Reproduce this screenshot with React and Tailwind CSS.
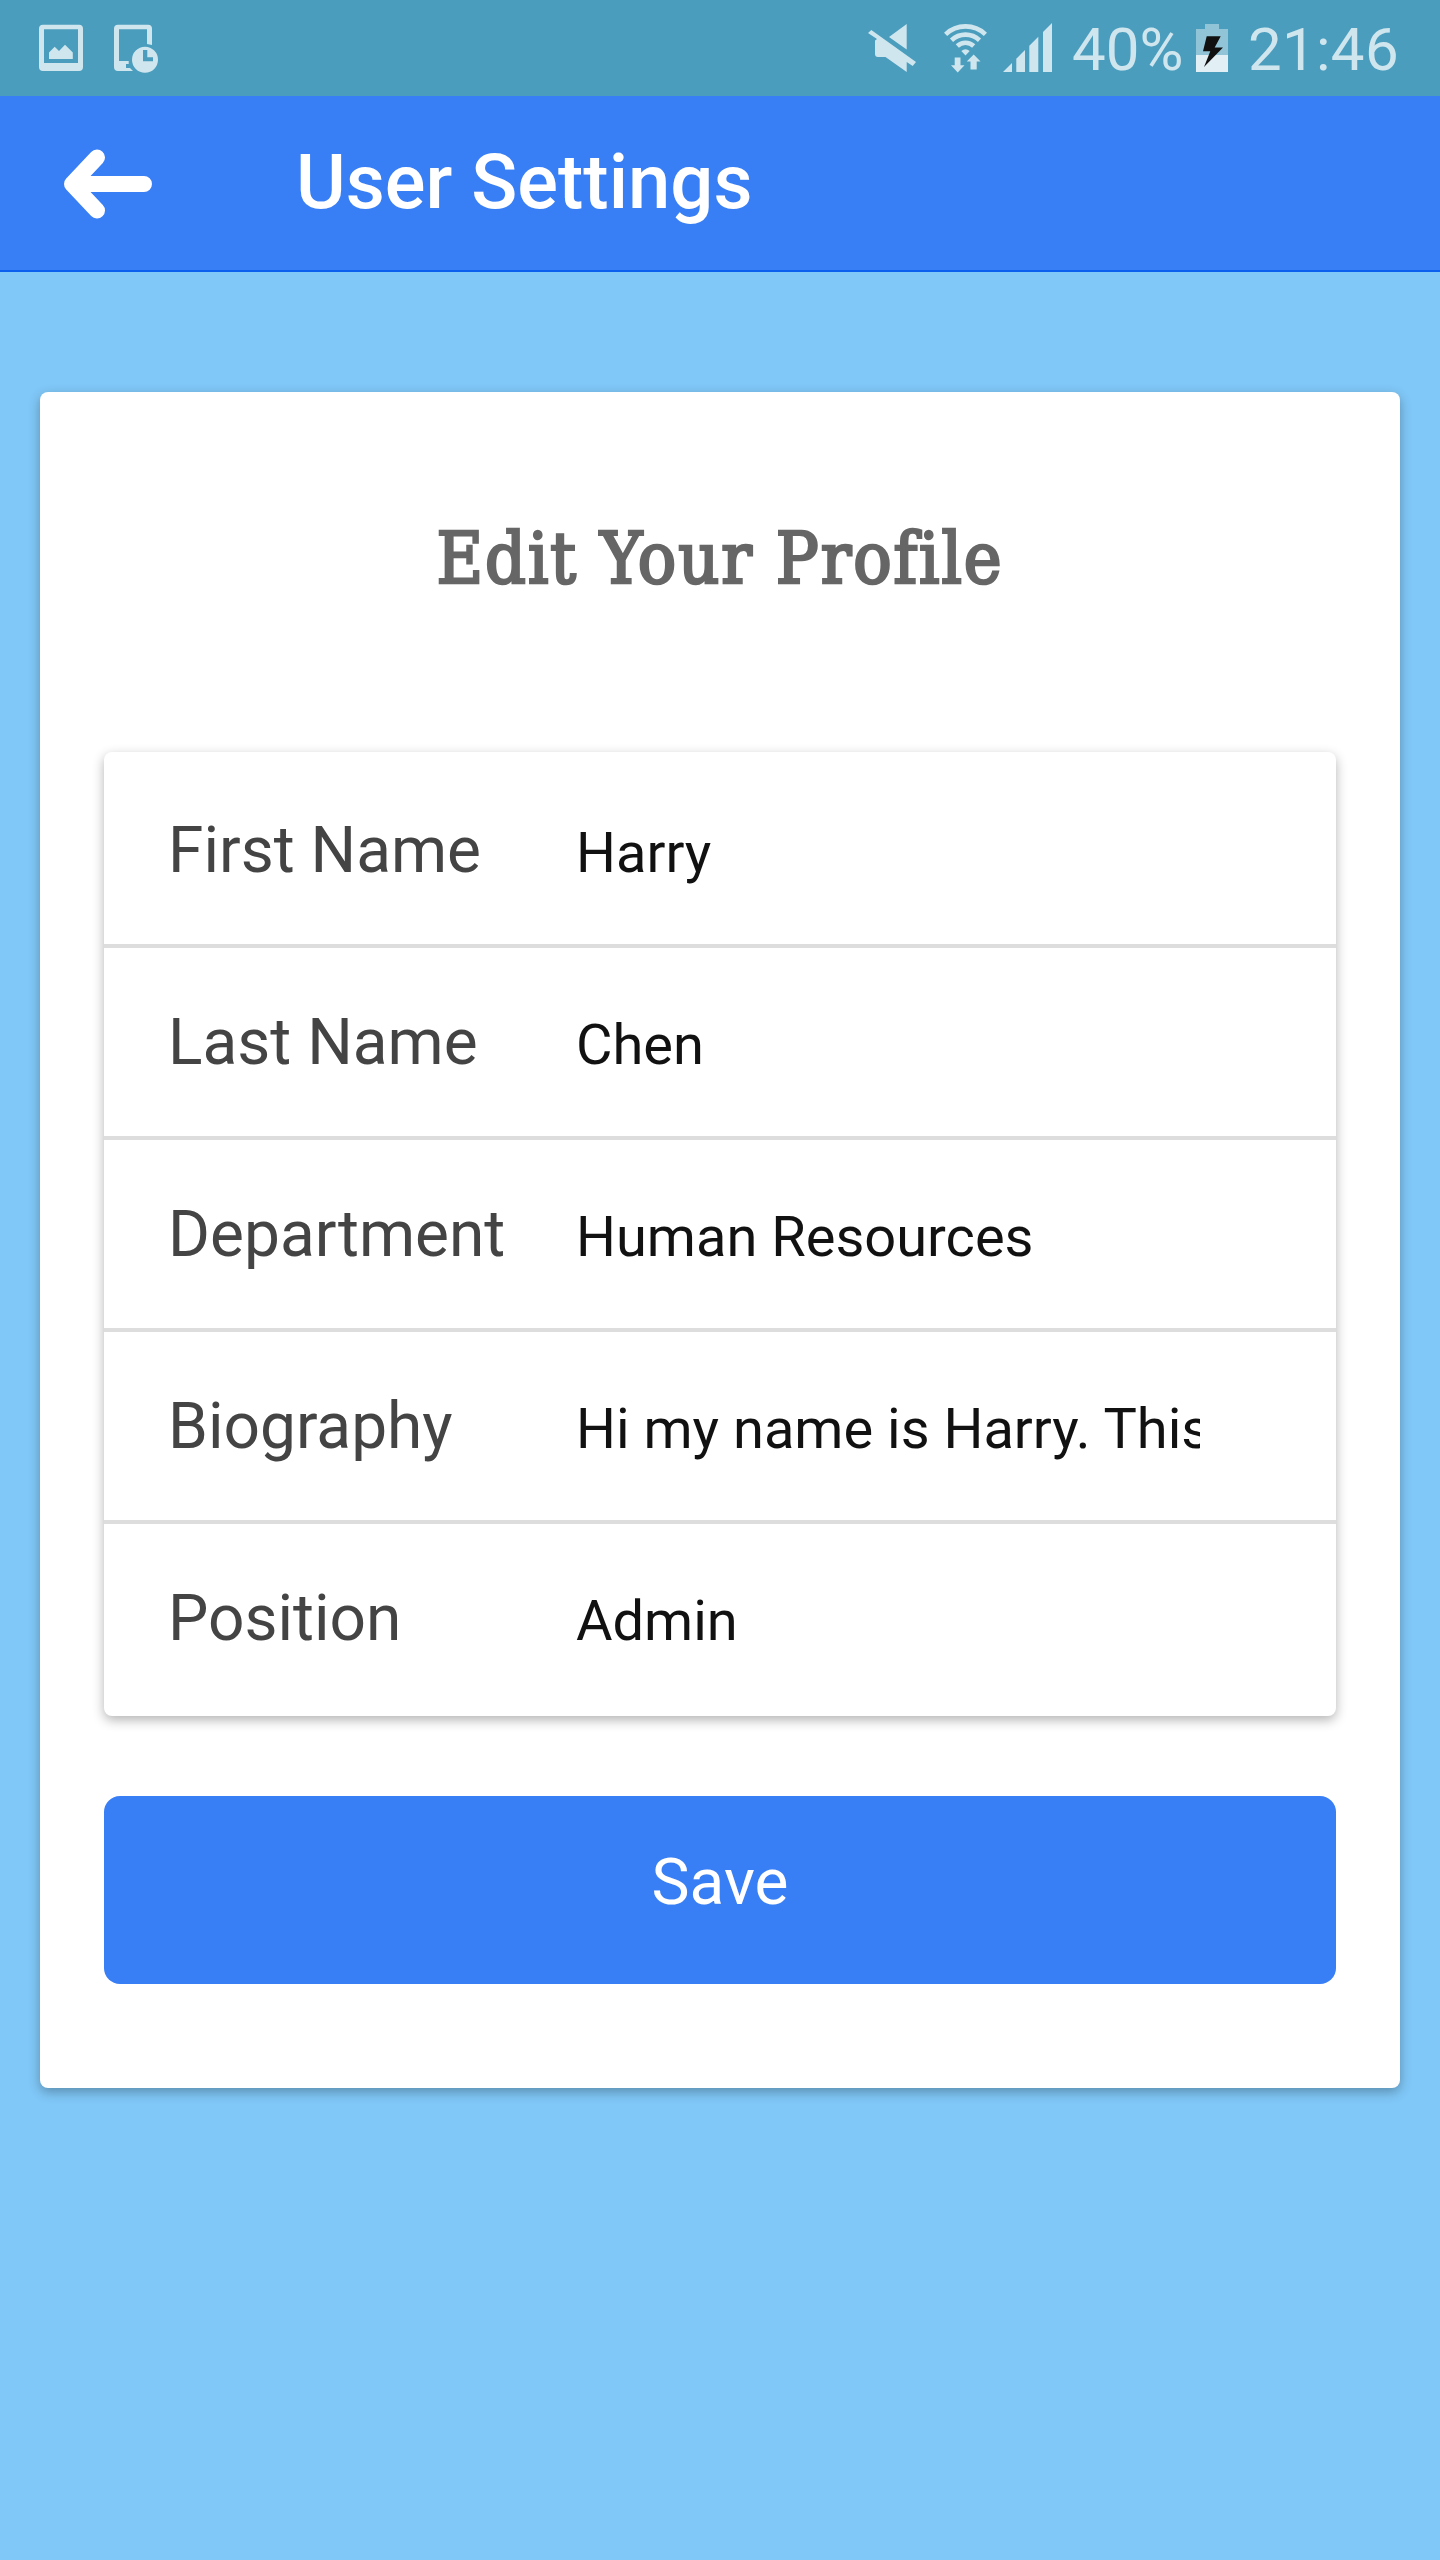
const fields = [
  { label: "First Name", value: "Harry" },
  { label: "Last Name", value: "Chen" },
  { label: "Department", value: "Human Resources" },
  { label: "Biography", value: "Hi my name is Harry. This" },
  { label: "Position", value: "Admin" },
];

function PictureIcon() {
  return (
    <svg className="h-12 w-11" viewBox="0 0 44 48" fill="#d0e6ee">
      <path fillRule="evenodd" d="M4 0.7H40Q44 0.7 44 4.7V43Q44 47 40 47H4Q0 47 0 43V4.7Q0 0.7 4 0.7ZM5 5.3V39H39V5.3Z" />
      <path d="M10 28.5L15.7 22.7L20 27L26 20.8L33.8 28.5V35H10Z" />
    </svg>
  );
}

function DeviceClockIcon() {
  return (
    <svg className="h-[50px] w-11" viewBox="0 0 44 50" fill="#d0e6ee">
      <path d="M4 0.7H34Q38 0.7 38 4.7V21L33 20V5.3H5V37H14.7V40H12V44H16L19 47H4Q0 47 0 43V4.7Q0 0.7 4 0.7Z" />
      <path fillRule="evenodd" d="M31 22.7A13 13 0 1 1 31 48.7A13 13 0 1 1 31 22.7ZM29 26V37.3H39V33.3H33.3V26Z" />
    </svg>
  );
}

function MutedIcon() {
  return (
    <svg className="h-[50px] w-12" viewBox="0 0 48 50" fill="#d0e6ee">
      <path d="M38.7 1V26.5L21 14Z" />
      <path d="M3.3 7L48 39L44.7 43L38.7 39V49L17.5 34H10Q7 34 7 31V17.5L9 16L0 10Z" />
    </svg>
  );
}

function WifiIcon() {
  return (
    <svg className="h-[50px] w-[43px]" viewBox="0 0 43 50">
      <g fill="none" stroke="#d0e6ee" strokeWidth="4.6">
        <path d="M1.6 11.3A29 29 0 0 1 41.4 11.3" />
        <path d="M7.5 17.2A20.5 20.5 0 0 1 35.5 17.2" />
        <path d="M13.3 23A12 12 0 0 1 29.7 23" />
      </g>
      <g fill="#d0e6ee">
        <path d="M21.5 32.5L17.3 28Q21.5 24.5 25.7 28Z" />
        <path d="M10.7 34.5H16.5V42.3H20.5L13.7 49.5L7 42.3H10.7Z" />
        <path d="M29.7 31.5L36.5 38.5H32.7V46.5H26.5V38.5H22.7Z" />
      </g>
    </svg>
  );
}

function SignalIcon() {
  return (
    <svg className="h-[49px] w-[49px]" viewBox="0 0 49 49" fill="#d0e6ee">
      <path d="M0 49L9 40V49Z" />
      <path d="M13.3 49V35.7L22 27V49Z" />
      <path d="M26.3 49V22.7L35.3 13.7V49Z" />
      <path d="M40 49V9L49 0V49Z" />
    </svg>
  );
}

function BatteryIcon() {
  return (
    <svg className="h-12 w-8" viewBox="0 0 32 48">
      <path fill="#92c4d7" d="M9 0H23V5H32V31H0V5H9Z" />
      <path fill="#e2eff5" d="M0 31H32V48H0Z" />
      <path fill="#111" d="M10.7 12.3H24.7L18.7 23.5H27L8 43L14.3 27.3H7Z" />
    </svg>
  );
}

function BackIcon() {
  return (
    <svg className="h-[70px] w-[88px]" viewBox="0 0 88 70" fill="none" stroke="#fff" strokeWidth="16" strokeLinecap="round" strokeLinejoin="round">
      <path d="M33 8.5L8 35L33 61.5M9 35H80" />
      <path fill="#fff" stroke="none" d="M8 27L30 35L8 43Z" />
    </svg>
  );
}

export default function App() {
  return (
    <div className="flex h-[2560px] w-[1440px] flex-col overflow-hidden bg-[#80c8f8] font-['Roboto',sans-serif]">
      <div className="flex h-24 shrink-0 items-start bg-[#4a9dbd] pt-6 pl-[39px] text-[60px] leading-none whitespace-nowrap text-[#d0e6ee]">
        <PictureIcon />
        <div className="ml-[31px]"><DeviceClockIcon /></div>
        <div className="ml-[710px] -mt-px"><MutedIcon /></div>
        <div className="ml-[28px] -mt-px"><WifiIcon /></div>
        <div className="ml-[16px] -mt-px"><SignalIcon /></div>
        <span className="ml-5 -mt-1 w-[124px]">40%</span>
        <BatteryIcon />
        <span className="ml-5 -mt-1 tracking-[0.3px]">21:46</span>
      </div>

      <header className="flex h-44 shrink-0 items-start border-b-2 border-[#0c60ee] bg-[#387ef5] pl-16">
        <button className="mt-[53px]" aria-label="Back"><BackIcon /></button>
        <h1 className="mt-9 ml-36 text-[76px] leading-[100px] font-medium text-white">User Settings</h1>
      </header>

      <main className="mx-10 mt-[120px] flex h-[1696px] flex-col rounded-lg bg-white px-16 shadow-[0_4px_12px_rgba(0,0,0,0.3)]">
        <h2 className="mt-[117px] h-[100px] text-center font-['DejaVu_Serif_Condensed','DejaVu_Serif',serif] text-[71px] leading-[100px] tracking-[1.9px] whitespace-nowrap text-[#666] [-webkit-text-stroke:2.6px_#666]">
          Edit Your Profile
        </h2>

        <div className="mt-[143px] rounded-lg bg-white shadow-[0_4px_12px_rgba(0,0,0,0.3)]">
          {fields.map(({ label, value }) => (
            <label key={label} className="-mt-1 flex h-[196px] items-baseline border-b-4 border-[#ddd] pt-[59px] pl-16 first:mt-0 last:border-transparent">
              <span className="w-[408px] shrink-0 text-[64px] leading-[80px] text-[#444]">{label}</span>
              <span className="w-[624px] overflow-x-clip text-[56px] leading-[80px] whitespace-nowrap text-[#111]">{value}</span>
            </label>
          ))}
        </div>

        <button className="mt-20 h-[188px] rounded-2xl bg-[#387ef5] pb-[14px] text-[64px] leading-[80px] text-white">Save</button>
      </main>
    </div>
  );
}
